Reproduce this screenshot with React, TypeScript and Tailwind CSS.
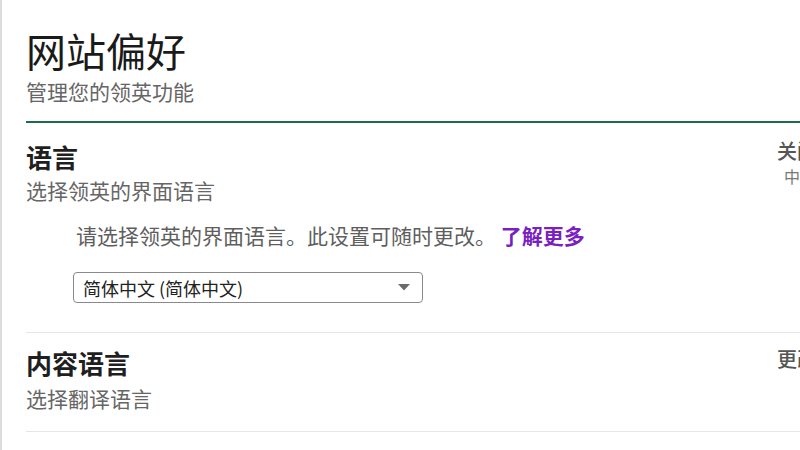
const font = "font-['Noto_Sans_CJK_SC','Noto_Sans',sans-serif]";

interface SettingRowProps {
  title: string;
  subtitle: string;
  action: string;
  status?: string;
  actionOffset: string;
  subtitleGap: string;
  children?: React.ReactNode;
  padBottom: string;
}

function SettingRow({ title, subtitle, action, status, actionOffset, subtitleGap, children, padBottom }: SettingRowProps) {
  return (
    <div className={`flex border-b border-[#e6e6e6] ${padBottom}`}>
      {/* Left column */}
      <div className="w-[751px] shrink-0">
        <div className="text-[26px] leading-[32px] font-bold text-[#1f1f1f]">{title}</div>
        <div className={`${subtitleGap} text-[21px] leading-[28px] text-[#666666]`}>{subtitle}</div>
        {children}
      </div>

      {/* Action column */}
      <div className={`flex flex-col items-start ${actionOffset}`}>
        <div className="text-[20px] leading-[28px] font-medium text-[#555555] whitespace-nowrap">{action}</div>
        {status && (
          <div className="ml-[7px] text-[16px] leading-[22px] text-[#777777] whitespace-nowrap">{status}</div>
        )}
      </div>
    </div>
  );
}

export default function App() {
  return (
    <div className={`w-[800px] h-[450px] overflow-hidden bg-white border-l-2 border-[#dcdcdc] ${font}`}>
      <div className="w-[900px] pl-[24px] pt-[26px]">
        {/* Header */}
        <div className="text-[40px] leading-[48px] text-[#1a1a1a]">网站偏好</div>
        <div className="mt-[3px] text-[21px] leading-[28px] text-[#666666]">管理您的领英功能</div>
        <div className="mt-[16px] h-[2px] bg-[#1c6b4a]" />

        <div className="pt-[18px]">
          <SettingRow
            title="语言"
            subtitle="选择领英的界面语言"
            action="关闭"
            status="中文"
            actionOffset="-mt-[4px]"
            subtitleGap="mt-[3px]"
            padBottom="pb-[29px]"
          >
            <div className="pl-[50px]">
              <div className="mt-[17px] text-[21px] leading-[28px] text-[#5e5e5e]">
                请选择领英的界面语言。此设置可随时更改。 <span className="font-bold text-[#7a1fc2]">了解更多</span>
              </div>
              <div className="mt-[23px] -ml-[3px] w-[350px] h-[31px] flex items-center justify-between border border-[#8a8a8a] rounded-[4px] pl-[9px] pr-[12px]">
                <span className="text-[18px] leading-[24px] text-[#222222]">简体中文 (简体中文)</span>
                <svg width="12" height="7" viewBox="0 0 12 7">
                  <path d="M0 0 L12 0 L6 6.5 Z" fill="#6b6b6b" />
                </svg>
              </div>
            </div>
          </SettingRow>

          <div className="pt-[14px]">
            <SettingRow
              title="内容语言"
              subtitle="选择翻译语言"
              action="更改"
              actionOffset="-mt-[2px]"
              subtitleGap="mt-[5px]"
              padBottom="pb-[19px]"
            />
          </div>
        </div>
      </div>
    </div>
  );
}
